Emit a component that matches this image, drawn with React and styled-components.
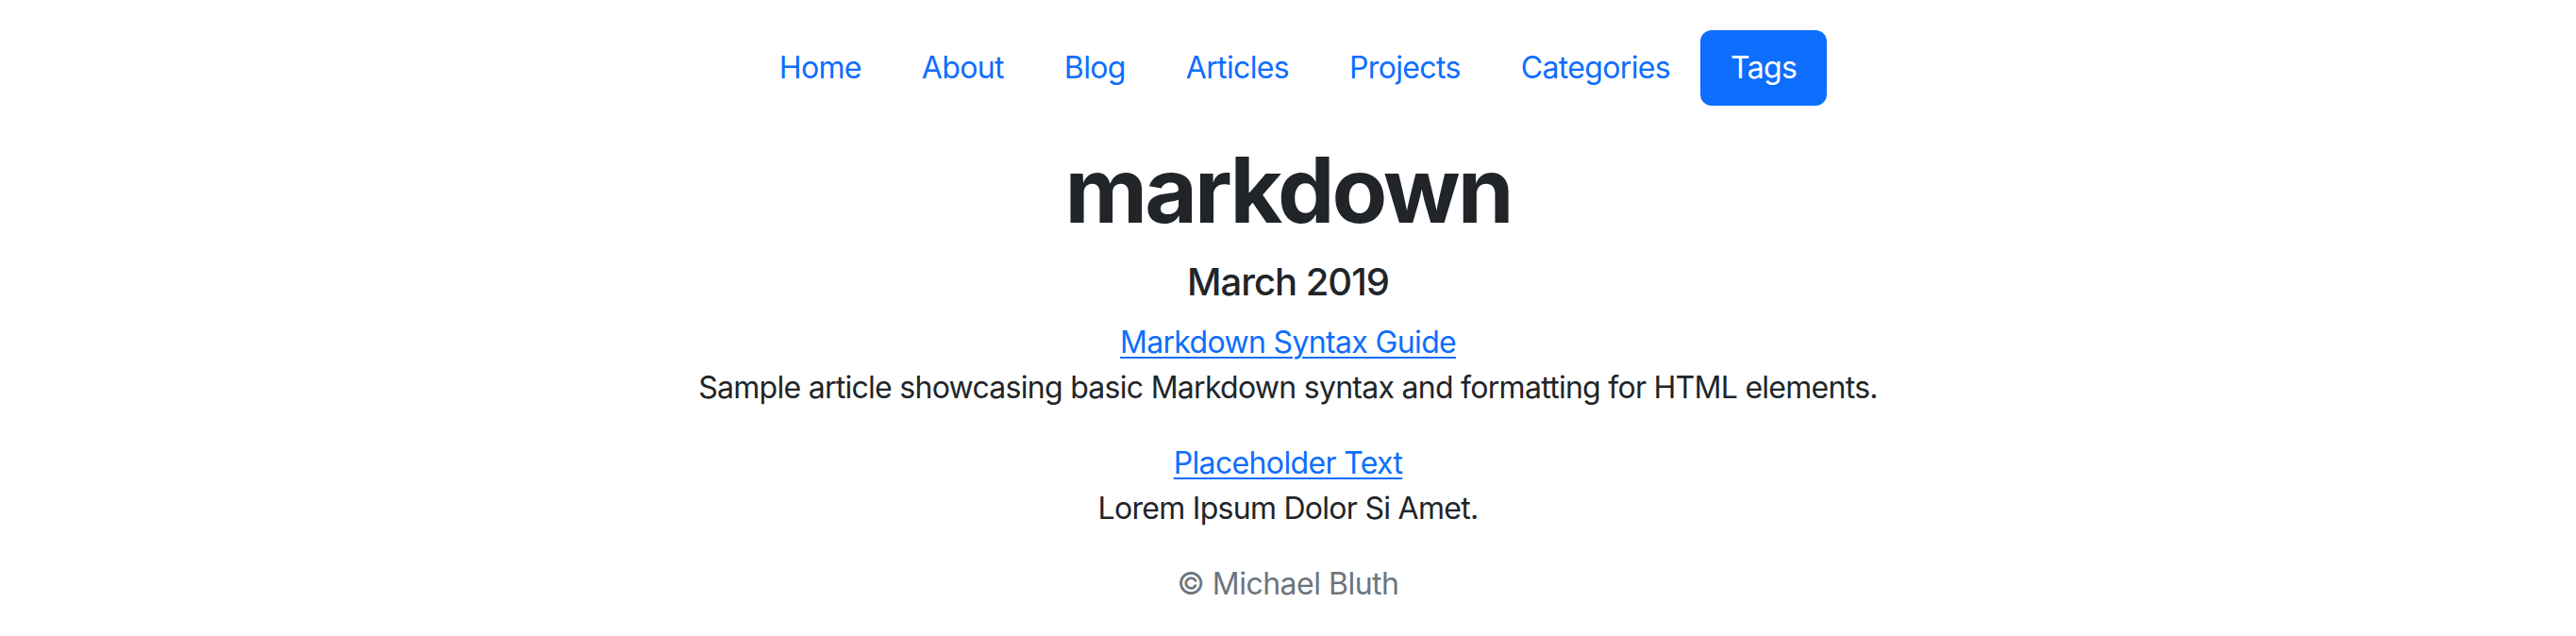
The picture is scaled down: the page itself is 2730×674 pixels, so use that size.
import React from "react";
import styled, { createGlobalStyle } from "styled-components";

const GlobalStyle = createGlobalStyle`
  html, body { margin: 0; padding: 0; background: #fff; }
  body {
    font-family: Inter, "Noto Sans", "Liberation Sans", sans-serif;
    font-size: 32px;
    line-height: 1.5;
    color: #212529;
    -webkit-font-smoothing: antialiased;
  }
`;

const Page = styled.div`
  display: flex;
  flex-direction: column;
  align-items: center;
  text-align: center;
  padding-top: 32px;
`;

const Nav = styled.nav`
  display: flex;
  justify-content: center;
  margin-bottom: 32px;
`;

const NavLink = styled.a`
  display: block;
  padding: 16px 32px;
  font-size: 32px;
  line-height: 48px;
  letter-spacing: -0.65px;
  color: ${(p) => (p.$active ? "#fff" : "#0d6efd")};
  background: ${(p) => (p.$active ? "#0d6efd" : "transparent")};
  border-radius: 12px;
  text-decoration: none;
`;

const Title = styled.h1`
  margin: 0 0 16px;
  font-size: 96px;
  line-height: 1.2;
  font-weight: 700;
  letter-spacing: -3px;
  color: #212529;
`;

const Month = styled.h2`
  margin: 0 0 16px;
  font-size: 40px;
  line-height: 1.2;
  font-weight: 500;
  letter-spacing: -1px;
  color: #212529;
`;

const Entry = styled.div`
  display: flex;
  flex-direction: column;
  align-items: center;
`;

const EntryLink = styled.a`
  color: #0d6efd;
  text-decoration: underline;
  text-underline-offset: 4px;
  text-decoration-thickness: 2px;
  letter-spacing: -0.65px;
`;

const Summary = styled.p`
  margin: 0 0 32px;
  letter-spacing: -0.72px;
`;

const Footer = styled.footer`
  color: #6c757d;
  letter-spacing: -0.5px;
`;

const navItems = ["Home", "About", "Blog", "Articles", "Projects", "Categories", "Tags"];

const entries = [
  {
    title: "Markdown Syntax Guide",
    summary: "Sample article showcasing basic Markdown syntax and formatting for HTML elements.",
  },
  { title: "Placeholder Text", summary: "Lorem Ipsum Dolor Si Amet." },
];

export default function App() {
  return (
    <>
      <GlobalStyle />
      <Page>
        <Nav>
          {navItems.map((n) => (
            <NavLink key={n} href="#" $active={n === "Tags"}>
              {n}
            </NavLink>
          ))}
        </Nav>
        <Title>markdown</Title>
        <Month>March 2019</Month>
        {entries.map((e) => (
          <Entry key={e.title}>
            <EntryLink href="#">{e.title}</EntryLink>
            <Summary>{e.summary}</Summary>
          </Entry>
        ))}
        <Footer>© Michael Bluth</Footer>
      </Page>
    </>
  );
}
